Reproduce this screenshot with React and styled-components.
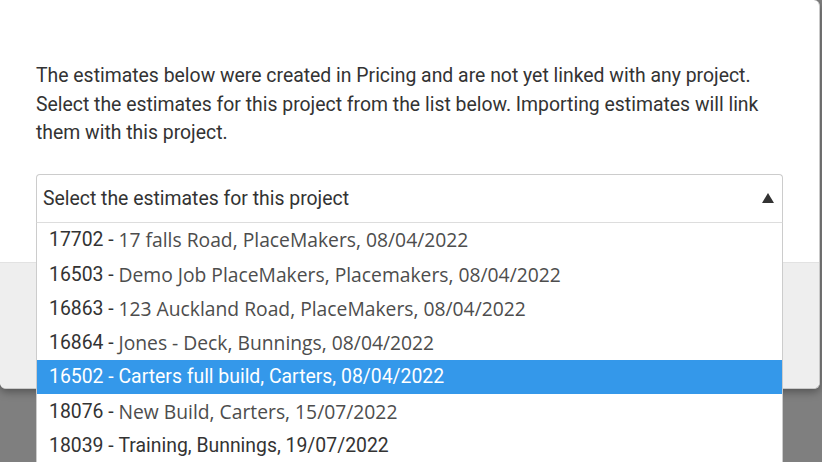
import React from "react";
import styled, { createGlobalStyle } from "styled-components";

const GlobalStyle = createGlobalStyle`
  html, body { margin: 0; padding: 0; }
  body { background: #7f7f7f; font-family: Roboto, "Liberation Sans", sans-serif; }
`;

const Page = styled.div`
  position: relative;
  width: 822px;
  height: 462px;
  overflow: hidden;
  background: #7f7f7f;
`;

const Modal = styled.div`
  width: 819px;
  background: #fff;
  border-right: 1px solid #c9c9c9;
  border-bottom: 1px solid #c9c9c9;
  border-radius: 0 6px 6px 6px;
  box-shadow: 0 3px 8px rgba(0, 0, 0, 0.35);
`;

const Body = styled.div`
  padding: 62px 36px 39px 36px;
`;

const Intro = styled.p`
  margin: 0 0 26px 0;
  font-size: 19.4px;
  line-height: 28.6px;
  color: #333;
  white-space: nowrap;
`;

const SelectWrap = styled.div`
  position: relative;
`;

const SelectBox = styled.div`
  height: 47px;
  border: 1px solid #ccc;
  border-bottom-color: #ddd;
  border-radius: 4px 4px 0 0;
  display: flex;
  align-items: center;
  justify-content: space-between;
  padding: 0 8px 0 6px;
  font-size: 19.4px;
  color: #333;
  background: #fff;
`;

const Caret = styled.span`
  width: 0;
  height: 0;
  border-left: 6px solid transparent;
  border-right: 6px solid transparent;
  border-bottom: 10px solid #333;
  margin-top: -1px;
`;

const Listbox = styled.ul`
  position: absolute;
  top: 100%;
  left: 0;
  right: 0;
  margin: 0;
  padding: 0;
  list-style: none;
  background: #fff;
  border: 1px solid #ccc;
  border-top: none;
  z-index: 10;
`;

const Option = styled.li`
  height: 34.25px;
  display: flex;
  align-items: center;
  padding-left: 12px;
  font-size: 19.4px;
  white-space: pre;
  color: ${(p) => (p.$active ? "#fff" : "#333")};
  background: ${(p) => (p.$active ? "#3498ea" : "transparent")};
`;

const Code = styled.span`
  font-family: Roboto, "Liberation Sans", sans-serif;
`;

const Name = styled.span`
  font-family: ${(p) => (p.$alt ? '"Open Sans", "Noto Sans", sans-serif' : 'Roboto, "Liberation Sans", sans-serif')};
  font-size: ${(p) => (p.$alt ? "19.3px" : "19.4px")};
  color: ${(p) => (p.$active ? "#fff" : p.$alt ? "#4d4d4d" : "#333")};
`;

const Footer = styled.div`
  height: 125px;
  background: #eeeeee;
  border-top: 1px solid #e2e2e2;
  border-radius: 0 0 6px 6px;
`;

const options = [
  { code: "17702 - ", name: "17 falls Road, PlaceMakers, 08/04/2022", alt: true },
  { code: "16503 - ", name: "Demo Job PlaceMakers, Placemakers, 08/04/2022", alt: true },
  { code: "16863 - ", name: "123 Auckland Road, PlaceMakers, 08/04/2022", alt: true },
  { code: "16864 - ", name: "Jones - Deck, Bunnings, 08/04/2022", alt: true },
  { code: "16502 - ", name: "Carters full build, Carters, 08/04/2022", alt: false, active: true },
  { code: "18076 - ", name: "New Build, Carters, 15/07/2022", alt: true },
  { code: "18039 - ", name: "Training, Bunnings, 19/07/2022", alt: false },
];

export default function App() {
  return (
    <>
      <GlobalStyle />
      <Page>
        <Modal>
          <Body>
            <Intro>
              The estimates below were created in Pricing and are not yet linked with any project.
              <br />
              Select the estimates for this project from the list below. Importing estimates will link
              <br />
              them with this project.
            </Intro>
            <SelectWrap>
              <SelectBox>
                <span>Select the estimates for this project</span>
                <Caret />
              </SelectBox>
              <Listbox>
                {options.map((o) => (
                  <Option key={o.code} $active={o.active}>
                    <Code>{o.code}</Code>
                    <Name $alt={o.alt} $active={o.active}>
                      {o.name}
                    </Name>
                  </Option>
                ))}
              </Listbox>
            </SelectWrap>
          </Body>
          <Footer />
        </Modal>
      </Page>
    </>
  );
}
